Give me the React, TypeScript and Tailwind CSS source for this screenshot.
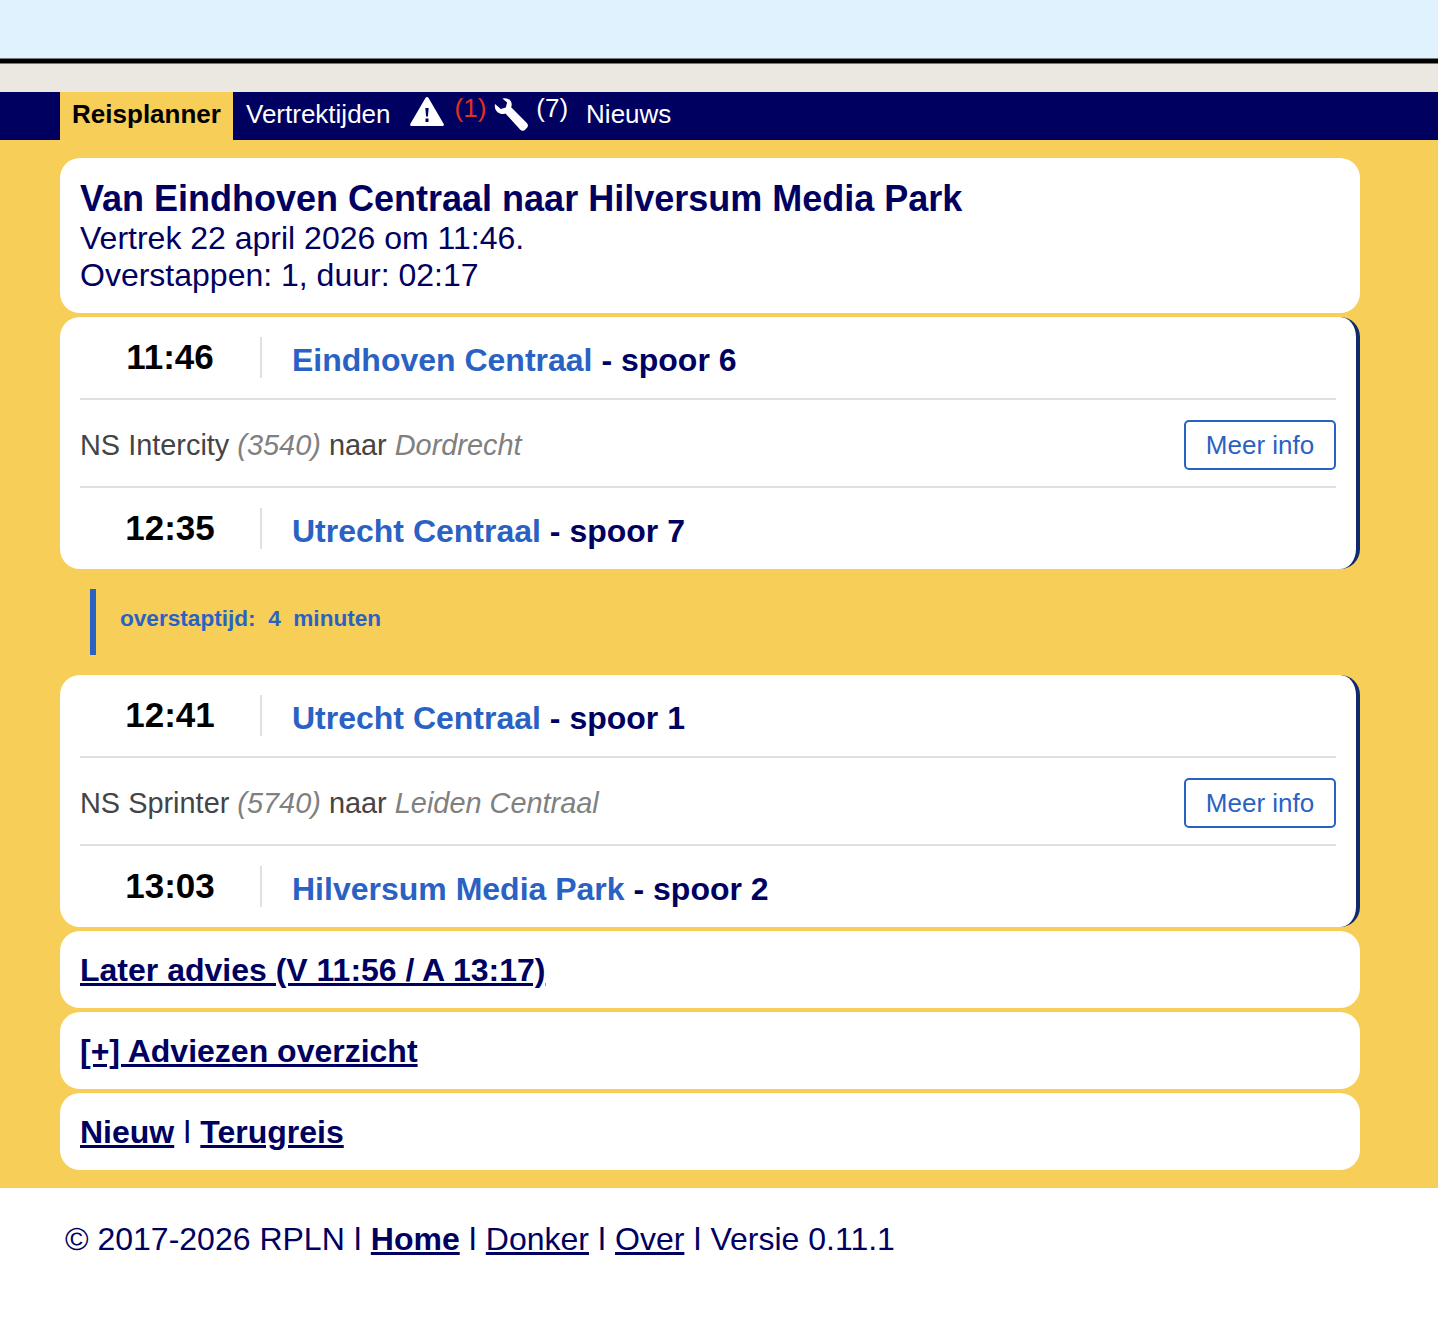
const sans = "font-['Liberation_Sans',Arial,sans-serif]";

interface Stop {
  time: string;
  station: string;
  track: string;
}

interface Leg {
  from: Stop;
  to: Stop;
  train: string;
  number: string;
  direction: string;
}

const legs: Leg[] = [
  {
    from: { time: '11:46', station: 'Eindhoven Centraal', track: 'spoor 6' },
    to: { time: '12:35', station: 'Utrecht Centraal', track: 'spoor 7' },
    train: 'NS Intercity',
    number: '(3540)',
    direction: 'Dordrecht',
  },
  {
    from: { time: '12:41', station: 'Utrecht Centraal', track: 'spoor 1' },
    to: { time: '13:03', station: 'Hilversum Media Park', track: 'spoor 2' },
    train: 'NS Sprinter',
    number: '(5740)',
    direction: 'Leiden Centraal',
  },
];

function WarningIcon() {
  return (
    <svg viewBox="0 0 34 29" className="w-[34px] h-[29px]" aria-hidden="true">
      <path
        fill="#fff"
        fillRule="evenodd"
        d="M17 0c.7 0 1.200.4 1.700 1.200L33.600 26.800c.6 1.200 0 2.200-1.300 2.200H1.700C.4 29-.2 28 .4 26.800L15.300 1.200C15.800.4 16.300 0 17 0ZM15.300 11l.8 8.500h1.800l.8-8.500ZM15.500 21.500v3.500h3v-3.500Z"
      />
    </svg>
  );
}

function WrenchIcon() {
  return (
    <svg viewBox="0 0 34 33" className="w-[34px] h-[33px]" aria-hidden="true">
      <path
        fill="#fff"
        d="M8.500.4c3.300-.8 6.400.2 8 2.400 1.400 1.900 1.500 4.400.7 6.500L32.800 25c1.500 1.500 1.500 3.300.2 4.700l-2.200 2.200c-1.400 1.300-3.100 1.300-4.500-.1L11.500 15.500c-2.800 1-5.600.5-7.800-1.300C1.300 12.200.3 9.200 1 6.100l5.800 5 5-1.500 1.300-5Z"
      />
    </svg>
  );
}

function Sep() {
  return <span className="inline-block w-[8.300px] text-center text-[23px] font-bold align-[5px]">|</span>;
}

function StopRow({ stop }: { stop: Stop }) {
  return (
    <div className="flex items-start h-[62px] pt-[20px]">
      <div className="w-[182px] h-[41px] border-r-2 border-[#e0e0e0] text-[35px] leading-[40px] font-bold text-black text-center">
        {stop.time}
      </div>
      <div className="ml-[30px] pt-[3px] text-[32px] leading-[40px] font-bold text-[#000060]">
        <span className="text-[#2a62c4]">{stop.station}</span> - {stop.track}
      </div>
    </div>
  );
}

function LegCard({ leg }: { leg: Leg }) {
  return (
    <div className="bg-white rounded-[20px] border-r-4 border-[#0f2a6e] pl-[20px] pr-[20px] h-[252px]">
      <StopRow stop={leg.from} />
      <div className="flex items-center justify-between h-[90px] border-y-2 border-[#e0e0e0] mt-[19px] pt-[4px]">
        <div className="text-[28.900px] text-[#444] pt-[2px]">
          {leg.train} <i className="text-[#808080]">{leg.number}</i> naar{' '}
          <i className="text-[#808080]">{leg.direction}</i>
        </div>
        <button className="w-[152px] h-[50px] rounded-[5px] border-2 border-[#2a62c4] text-[#2a62c4] text-[26px]">
          Meer info
        </button>
      </div>
      <StopRow stop={leg.to} />
    </div>
  );
}

function LinkCard({ children }: { children: React.ReactNode }) {
  return (
    <div className="bg-white rounded-[20px] h-[77px] px-[20px] flex items-center text-[32px] font-bold text-[#000060]">
      <div>{children}</div>
    </div>
  );
}

export default function App() {
  return (
    <div className={`${sans} min-h-[1332px] bg-white`}>
      <div className="h-[58px] bg-[#e0f2fe]" />
      <div className="h-[6px] bg-black border-y border-[#777]" />
      <div className="h-[28px] bg-[#ebe8e2]" />

      <nav className="h-[48px] bg-[#000060] pl-[60px] flex items-stretch text-[26px] text-white">
        <div className="w-[173px] bg-[#f7ce58] text-black font-bold flex items-center justify-center pb-[4px]">Reisplanner</div>
        <div className="ml-[13px] flex items-center pb-[4px]">Vertrektijden</div>
        <div className="ml-[19px] pt-[5px]"><WarningIcon /></div>
        <div className="ml-[11px] text-[#e0301e] leading-[32px]">(1)</div>
        <div className="ml-[8px] pt-[6px]"><WrenchIcon /></div>
        <div className="ml-[8px] leading-[32px]">(7)</div>
        <div className="ml-[18px] flex items-center pb-[4px]">Nieuws</div>
      </nav>

      <main className="bg-[#f7ce58] pl-[60px] pr-[78px] pt-[18px] pb-[18px] flex flex-col gap-[4px] text-[#000060]">
        <div className="bg-white rounded-[20px] h-[155px] px-[20px] pt-[20px]">
          <div className="text-[36px] leading-[42px] font-bold">Van Eindhoven Centraal naar Hilversum Media Park</div>
          <div className="text-[32px] leading-[37px]">Vertrek 22 april 2026 om 11:46.</div>
          <div className="text-[32px] leading-[37px]">Overstappen: 1, duur: 02:17</div>
        </div>

        <LegCard leg={legs[0]} />

        <div className="my-[16px] ml-[30px] h-[66px] border-l-[6px] border-[#2a62c4] pl-[24px] pb-[6px] flex items-center text-[22.600px] font-bold text-[#2a62c4]">
          <span className="whitespace-pre">overstaptijd:  4  minuten</span>
        </div>

        <LegCard leg={legs[1]} />

        <LinkCard><a className="underline">Later advies (V 11:56 / A 13:17)</a></LinkCard>
        <LinkCard><a className="underline">[+] Adviezen overzicht</a></LinkCard>
        <LinkCard>
          <a className="underline">Nieuw</a> <Sep /> <a className="underline">Terugreis</a>
        </LinkCard>
      </main>

      <footer className="pl-[65px] pt-[29px] text-[32px] leading-[40px] text-[#000060]">
        © 2017-2026 RPLN <Sep /> <a className="underline font-bold">Home</a> <Sep /> <a className="underline">Donker</a> <Sep />{' '}
        <a className="underline">Over</a> <Sep /> Versie 0.11.1
      </footer>
    </div>
  );
}
